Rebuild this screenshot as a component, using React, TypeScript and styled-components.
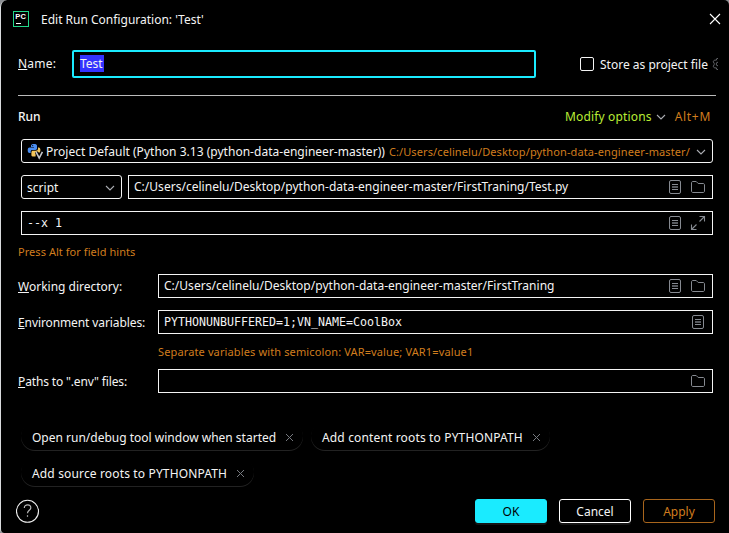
import React from 'react';
import styled, { createGlobalStyle } from 'styled-components';

const white = '#f4f4f4';
const orange = '#d17d1e';
const cyan = '#1aebff';
const grey = '#868a91';

const GlobalStyle = createGlobalStyle`
  * { box-sizing: border-box; }
  html, body, #root { margin: 0; height: 100%; }
  body { background: #8c8f93; overflow: hidden; }
`;

const Dialog = styled.main`
  display: flex;
  flex-direction: column;
  width: 729px;
  height: 533px;
  border-left: 1px solid #d9dbdd;
  border-radius: 7px 5px 0 4px;
  background: #000;
  color: ${white};
  font: 12px/17px 'Noto Sans', sans-serif;
  white-space: pre;
  overflow: hidden;
`;

const Header = styled.header`
  display: flex;
  align-items: flex-start;
  height: 50px;
  padding: 11px 8px 0 12px;
`;

const Title = styled.span`
  flex: 1;
  margin-left: 12px;
`;

const CloseIcon = styled.svg`
  width: 12px;
  height: 12px;
  margin-top: 2px;
`;

const NameRow = styled.div`
  display: flex;
  height: 45px;
  padding-left: 17px;
`;

const Label = styled.label<{ $track?: number }>`
  flex: none;
  padding-top: 4px;
  letter-spacing: ${(p) => p.$track ?? 0}px;
  &::first-letter {
    text-decoration: underline;
    text-decoration-thickness: 1px;
    text-underline-offset: 1px;
  }
`;

const NameLabel = styled(Label)`
  width: 54px;
  padding-top: 5px;
`;

const NameInput = styled.div`
  width: 464px;
  height: 28px;
  padding: 3px 6px;
  border: 2px solid ${cyan};
  border-radius: 2px;
`;

const Selection = styled.span`
  display: block;
  width: 24px;
  height: 17px;
  background: #3333ff;
`;

const Checkbox = styled.span`
  width: 14px;
  height: 14px;
  margin: 7px 6px 0 44px;
  border: 1px solid ${white};
  border-radius: 2px;
`;

const CheckLabel = styled.span`
  padding-top: 6px;
`;

const GearIcon = styled.svg`
  width: 6px;
  height: 14px;
  margin: 7px 0 0 4px;
`;

const Section = styled.section`
  display: flex;
  align-items: flex-start;
  height: 44px;
  margin: 0 13px 0 17px;
  padding: 12px 5px 0 0;
  border-top: 1px solid #bbb;
`;

const SectionTitle = styled.h2`
  flex: 1;
  margin: 0;
  font-size: 12px;
  font-weight: 500;
`;

const Modify = styled.span`
  color: #b9ec35;
  letter-spacing: 0.15px;
`;

const Shortcut = styled.span`
  margin-left: 9px;
  color: ${orange};
  letter-spacing: 0.7px;
`;

const Chevron = styled.svg`
  flex: none;
  width: 10px;
  height: 6px;
`;

const ModifyChevron = styled(Chevron)`
  margin: 6px 0 0 4px;
`;

const Line = styled.div<{ $gap: number }>`
  display: flex;
  flex: none;
  gap: 6px;
  height: 24px;
  margin: 0 16px ${(p) => p.$gap}px 20px;
`;

const FormLine = styled.div<{ $gap: number }>`
  display: grid;
  grid-template-columns: 140px 1fr;
  flex: none;
  height: 24px;
  margin: 0 16px ${(p) => p.$gap}px 17px;
`;

const Field = styled.div`
  display: flex;
  flex: 1;
  gap: 7px;
  min-width: 0;
  height: 24px;
  padding: 2px 6px 0 5px;
  border: 1px solid ${white};
`;

const Value = styled.span`
  flex: 1;
  min-width: 0;
  letter-spacing: 0.02px;
`;

const MonoValue = styled(Value)`
  padding-top: 1px;
  font: 11.63px/17px 'DejaVu Sans Mono', monospace;
  letter-spacing: 0;
`;

const Combo = styled.div<{ $width?: number }>`
  display: flex;
  flex: ${(p) => (p.$width ? `0 0 ${p.$width}px` : '1')};
  min-width: 0;
  height: 24px;
  padding: 3px 6px 0 5px;
  border: 1px solid ${white};
  border-radius: 3px;
`;

const ComboValue = styled.span`
  flex: 1;
  letter-spacing: 0.02px;
`;

const InterpreterPath = styled.span`
  margin-left: 4px;
  color: ${orange};
  font-size: 11px;
  letter-spacing: 0.11px;
`;

const ComboChevron = styled(Chevron)`
  margin: 6px 0 0 6px;
`;

const FieldIcon = styled.svg`
  flex: none;
  width: 16px;
  height: 16px;
  margin-top: 1px;
`;

const InterpreterIcon = styled.svg`
  flex: none;
  width: 17px;
  height: 17px;
  margin-right: 2px;
`;

const Hint = styled.p<{ $indent: number; $height: number; $track: number }>`
  flex: none;
  height: ${(p) => p.$height}px;
  margin: 0 0 0 ${(p) => p.$indent}px;
  color: ${orange};
  font-size: 11px;
  line-height: 15px;
  letter-spacing: ${(p) => p.$track}px;
`;

const Chips = styled.div`
  display: flex;
  flex-wrap: wrap;
  align-content: flex-start;
  gap: 8px;
  height: 72px;
  flex: none;
  margin: 0 16px 5px 20px;
`;

const Chip = styled.span<{ $width: number; $track: number }>`
  display: flex;
  justify-content: space-between;
  width: ${(p) => p.$width}px;
  height: 28px;
  padding: 7px 9px 0 11px;
  border-radius: 14px;
  box-shadow: 0 1px 0 #222;
  letter-spacing: ${(p) => p.$track}px;
`;

const ChipClose = styled.svg`
  width: 9px;
  height: 9px;
  margin-top: 4px;
`;

const Footer = styled.footer`
  display: flex;
  gap: 12px;
  padding: 0 14px 0 15px;
`;

const HelpIcon = styled.svg`
  width: 24px;
  height: 24px;
  margin-right: auto;
`;

const Button = styled.button<{ $kind?: 'primary' | 'muted' }>`
  width: 72px;
  height: 24px;
  padding: 1px 0 0;
  border: 1px solid ${(p) => (p.$kind === 'primary' ? cyan : p.$kind === 'muted' ? '#a8651c' : '#fff')};
  border-radius: 3px;
  background: ${(p) => (p.$kind === 'primary' ? cyan : '#000')};
  box-shadow: ${(p) => (p.$kind === 'muted' ? 'none' : '0 2px 0 #151515')};
  color: ${(p) => (p.$kind === 'primary' ? '#000' : p.$kind === 'muted' ? orange : white)};
  font: inherit;
  line-height: 20px;
`;

const Down = () => <path d="M1 1l4 4 4-4" fill="none" stroke="#a9abb0" strokeWidth="1.1" />;

const DocIcon = () => (
  <FieldIcon viewBox="0 0 16 16">
    <rect x="2.5" y="1.5" width="11" height="13" rx="1.5" fill="none" stroke={grey} />
    <path d="M5 5.5h6M5 10.5h6" stroke={grey} />
    <path d="M5 8h6" stroke="#56595e" strokeWidth="2" />
  </FieldIcon>
);

const FolderIcon = () => (
  <FieldIcon viewBox="0 0 16 16">
    <path d="M1.5 4c0-1 .5-1.5 1.5-1.5h3.2l2 2H13c1 0 1.5.5 1.5 1.5v6c0 1-.5 1.5-1.5 1.5H3c-1 0-1.5-.5-1.5-1.5z" fill="none" stroke={grey} />
  </FieldIcon>
);

const ExpandIcon = () => (
  <FieldIcon viewBox="0 0 16 16">
    <path d="M9.5 1.5h5v5M14.5 1.5l-5 5M6.5 14.5h-5v-5M1.5 14.5l5-5" fill="none" stroke={grey} strokeWidth="1.1" />
  </FieldIcon>
);

const PythonIcon = () => (
  <InterpreterIcon viewBox="0 0 17 17">
    <path d="M4 4V2.7C4 1.5 5 1 7 1s3 .5 3 1.7v2.6C10 6.4 9.4 7 8.3 7H5.5C4.3 7 3.7 7.6 3.7 8.6V10H2.6C1.2 10 .7 9 .7 7.2s.5-2.7 1.9-2.7H7V4z" fill="#4a8df0" />
    <path d="M11 4.500h.6c1.300 0 1.800 1 1.800 2.700 0 1-.2 1.800-.6 2.200L9 9l-.5 4.500H7C5 13.500 4.400 13 4.400 12V9.300C4.400 8.200 5 7.700 6 7.700h2.800c1.400 0 2.200-.7 2.200-1.900z" fill="#f2c55c" />
    <circle cx="5.700" cy="2.600" r=".6" fill="#000" />
    <path d="M9.200 8.800l3 6.200 3-6.200" fill="none" stroke="#000" strokeWidth="3" />
    <path d="M9 8.800l3.200 6.200 3.200-6.200" fill="none" stroke="#c4c6cb" strokeWidth="1.600" />
  </InterpreterIcon>
);

const ProductIcon = () => (
  <svg width="16" height="16" viewBox="0 0 16 16">
    <rect x=".5" y=".5" width="15" height="15" fill="#000" stroke="#21d789" />
    <text x="2.300" y="8" fill="#fff" fontFamily="Liberation Sans, sans-serif" fontSize="7.500" fontWeight="700" textLength="10.500">PC</text>
    <path d="M3 12.500h5" stroke="#fff" />
  </svg>
);

const CloseX = () => (
  <ChipClose viewBox="0 0 9 9">
    <path d="M1 1l7 7M8 1L1 8" stroke="#777a80" />
  </ChipClose>
);

export default function App() {
  return (
    <>
      <GlobalStyle />
      <Dialog>
        <Header>
          <ProductIcon />
          <Title>Edit Run Configuration: 'Test'</Title>
          <CloseIcon viewBox="0 0 12 12">
            <path d="M1 1l10 10M11 1L1 11" stroke="#fff" strokeWidth="1.1" />
          </CloseIcon>
        </Header>
        <NameRow>
          <NameLabel $track={0.2}>Name:</NameLabel>
          <NameInput>
            <Selection>Test</Selection>
          </NameInput>
          <Checkbox />
          <CheckLabel>Store as project file</CheckLabel>
          <GearIcon viewBox="0 0 6 14">
            <path d="M6 1.500H4.800L4.300 3.200 2.500 3 1.200 4.800 2.200 6.200v1.600L1.200 9.200 2.500 11l1.800-.2.500 1.700H6M6 5.200a1.800 1.800 0 000 3.600" fill="none" stroke="#606266" />
          </GearIcon>
        </NameRow>
        <Section>
          <SectionTitle>Run</SectionTitle>
          <Modify>Modify options</Modify>
          <ModifyChevron viewBox="0 0 10 6"><Down /></ModifyChevron>
          <Shortcut>Alt+M</Shortcut>
        </Section>
        <Line $gap={12}>
          <Combo>
            <PythonIcon />
            <ComboValue>
              Project Default (Python 3.13 (python-data-engineer-master))
              <InterpreterPath>C:/Users/celinelu/Desktop/python-data-engineer-master/</InterpreterPath>
            </ComboValue>
            <ComboChevron viewBox="0 0 10 6"><Down /></ComboChevron>
          </Combo>
        </Line>
        <Line $gap={12}>
          <Combo $width={101}>
            <ComboValue>script</ComboValue>
            <ComboChevron viewBox="0 0 10 6"><Down /></ComboChevron>
          </Combo>
          <Field>
            <Value>C:/Users/celinelu/Desktop/python-data-engineer-master/FirstTraning/Test.py</Value>
            <DocIcon />
            <FolderIcon />
          </Field>
        </Line>
        <Line $gap={9}>
          <Field>
            <MonoValue>--x 1</MonoValue>
            <DocIcon />
            <ExpandIcon />
          </Field>
        </Line>
        <Hint $indent={17} $height={30} $track={0.05}>Press Alt for field hints</Hint>
        <FormLine $gap={12}>
          <Label>Working directory:</Label>
          <Field>
            <Value>C:/Users/celinelu/Desktop/python-data-engineer-master/FirstTraning</Value>
            <DocIcon />
            <FolderIcon />
          </Field>
        </FormLine>
        <FormLine $gap={10}>
          <Label $track={-0.1}>Environment variables:</Label>
          <Field>
            <MonoValue>PYTHONUNBUFFERED=1;VN_NAME=CoolBox</MonoValue>
            <DocIcon />
          </Field>
        </FormLine>
        <Hint $indent={157} $height={25} $track={0.13}>Separate variables with semicolon: VAR=value; VAR1=value1</Hint>
        <FormLine $gap={29}>
          <Label $track={-0.15}>Paths to ".env" files:</Label>
          <Field>
            <Value />
            <FolderIcon />
          </Field>
        </FormLine>
        <Chips>
          <Chip $width={282} $track={0}>Open run/debug tool window when started<CloseX /></Chip>
          <Chip $width={239} $track={0.15}>Add content roots to PYTHONPATH<CloseX /></Chip>
          <Chip $width={233} $track={0.15}>Add source roots to PYTHONPATH<CloseX /></Chip>
        </Chips>
        <Footer>
          <HelpIcon viewBox="0 0 24 24">
            <circle cx="11.500" cy="12.300" r="11" fill="none" stroke="#eee" strokeWidth="1.100" />
            <path d="M8.300 9c0-2 1.400-3.200 3.300-3.200s3.200 1.200 3.200 2.900c0 2.600-3.300 2.700-3.300 5.600M11.500 16.300v1.500" fill="none" stroke="#bbb" strokeWidth="1.200" />
          </HelpIcon>
          <Button $kind="primary">OK</Button>
          <Button>Cancel</Button>
          <Button $kind="muted">Apply</Button>
        </Footer>
      </Dialog>
    </>
  );
}
